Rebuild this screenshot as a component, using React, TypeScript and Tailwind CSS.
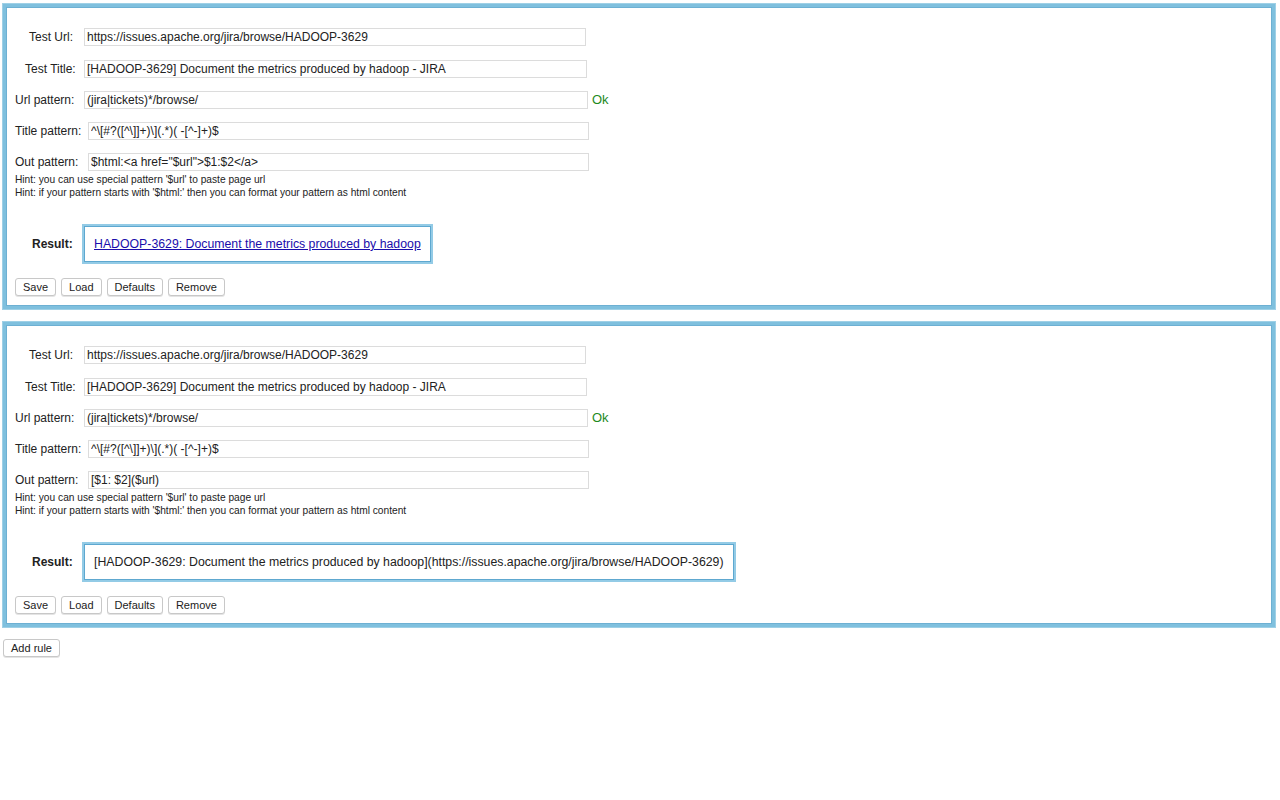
import React from 'react';

const sans = { fontFamily: '"Liberation Sans", Arial, sans-serif' };

interface Rule {
  outPattern: string;
  resultHtml: boolean;
  result: string;
}

const rules: Rule[] = [
  {
    outPattern: '$html:<a href="$url">$1:$2</a>',
    resultHtml: true,
    result: 'HADOOP-3629: Document the metrics produced by hadoop',
  },
  {
    outPattern: '[$1: $2]($url)',
    resultHtml: false,
    result: '[HADOOP-3629: Document the metrics produced by hadoop](https://issues.apache.org/jira/browse/HADOOP-3629)',
  },
];

function Field({ label, value, labelPad, inputW, mt, ok }: { label: string; value: string; labelPad: string; inputW: string; mt: string; ok?: boolean }) {
  return (
    <div className={`flex items-center h-[18px] ${mt}`}>
      <label className={`text-[12px] text-[#222] ${labelPad} shrink-0`}>{label}</label>
      <input
        readOnly
        value={value}
        className={`h-[18px] ${inputW} border border-[#dcdcdc] px-[2px] text-[12px] text-[#222] outline-none bg-white`}
        style={sans}
      />
      {ok && <span className="ml-[4px] text-[13px] text-[#1e8a1e]">Ok</span>}
    </div>
  );
}

function Btn({ children, className = '' }: { children: React.ReactNode; className?: string }) {
  return (
    <button className={`h-[18px] px-[7px] text-[11px] leading-none text-[#222] bg-white border border-[#c8c8c8] rounded-[3px] shadow-[0_1px_0_#e4e4e4] ${className}`}>
      {children}
    </button>
  );
}

function RuleBox({ rule }: { rule: Rule }) {
  return (
    <div className="border-[3px] border-[#7fc0de] shadow-[0_0_0_1px_#9fd0e6,inset_0_0_0_1px_#6db0d3] pt-[21px] pb-[10px]">
      <Field label="Test Url:" value="https://issues.apache.org/jira/browse/HADOOP-3629" labelPad="w-[78px] pl-[23px]" inputW="w-[502px]" mt="" />
      <Field label="Test Title:" value="[HADOOP-3629] Document the metrics produced by hadoop - JIRA" labelPad="w-[78px] pl-[19px]" inputW="w-[503px]" mt="mt-[14px]" />
      <Field label="Url pattern:" value="(jira|tickets)*/browse/" labelPad="w-[78px] pl-[9px]" inputW="w-[504px]" mt="mt-[13px]" ok />
      <Field label="Title pattern:" value="^\[#?([^\]]+)\](.*)( -[^-]+)$" labelPad="w-[82px] pl-[9px]" inputW="w-[501px]" mt="mt-[13px]" />
      <Field label="Out pattern:" value={rule.outPattern} labelPad="w-[82px] pl-[9px]" inputW="w-[501px]" mt="mt-[13px]" />
      <div className="pl-[9px] mt-[2px] text-[10.2px] leading-[13px] text-[#222]">
        <div>Hint: you can use special pattern '$url' to paste page url</div>
        <div>Hint: if your pattern starts with '$html:' then you can format your pattern as html content</div>
      </div>
      <div className="flex items-center mt-[25px]">
        <span className="w-[77px] pl-[26px] text-[12px] font-bold text-[#222] shrink-0">Result:</span>
        <div className="h-[40px] -ml-px flex items-center border-2 border-[#93cbe6] shadow-[inset_0_0_0_1px_#5ea8d0] pl-[10px] pr-[10px] text-[12.3px] text-[#222]">
          {rule.resultHtml ? (
            <a href="#" className="text-[#1a0dab] underline">{rule.result}</a>
          ) : (
            <span>{rule.result}</span>
          )}
        </div>
      </div>
      <div className="flex gap-[5px] pl-[9px] mt-[14px]">
        <Btn>Save</Btn>
        <Btn>Load</Btn>
        <Btn>Defaults</Btn>
        <Btn>Remove</Btn>
      </div>
    </div>
  );
}

export default function App() {
  return (
    <div className="min-h-[800px] bg-white pl-[3px] pr-[5px] pt-[4px]" style={sans}>
      <div className="flex flex-col gap-[13px]">
        {rules.map((r, i) => (
          <RuleBox key={i} rule={r} />
        ))}
      </div>
      <Btn className="mt-[12px]">Add rule</Btn>
    </div>
  );
}
